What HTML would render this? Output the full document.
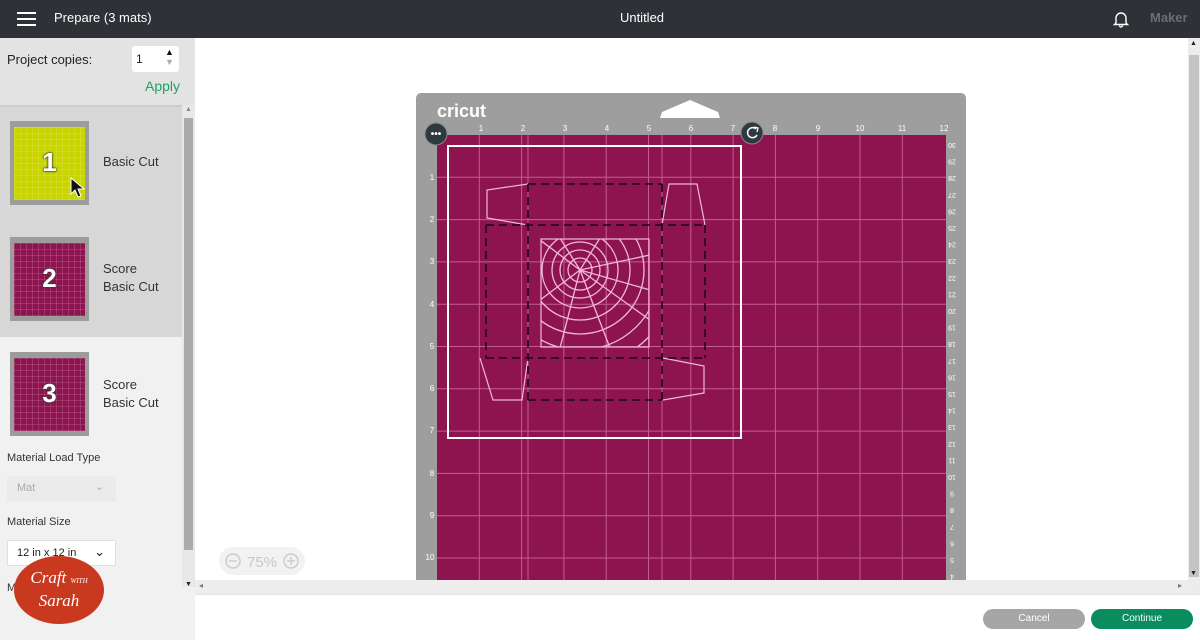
<!DOCTYPE html>
<html><head><meta charset="utf-8"><style>
*{margin:0;padding:0;box-sizing:border-box}
body{width:1200px;height:640px;overflow:hidden;background:#fff;font-family:"Liberation Sans",sans-serif;position:relative}
.a{position:absolute}
.hdr{left:0;top:0;width:1200px;height:38px;background:#2e3136;color:#fff}
.lp{left:0;top:38px;width:195px;height:602px;background:#f1f1f1}
.thumb{position:absolute;left:10px;width:79px;height:84px;background:#9c9c9c}
.thumb .in{position:absolute;left:4px;top:6px;right:4px;bottom:5px;background-image:linear-gradient(rgba(255,255,255,.13) 1px,transparent 1px),linear-gradient(90deg,rgba(255,255,255,.13) 1px,transparent 1px);background-size:6px 6px}
.thumb .n{position:absolute;left:0;right:0;top:26px;text-align:center;color:#fff;font-size:26px;font-weight:bold;text-shadow:0 0 2px #333,0 0 2px #333}
.lbl{position:absolute;left:103px;font-size:13px;color:#333;line-height:18px}
</style></head><body>
<div class="a hdr">
  <div class="a" style="left:17px;top:12px;width:19px;height:2px;background:#fff;box-shadow:0 6px 0 #fff,0 12px 0 #fff"></div>
  <div class="a" style="left:54px;top:10px;font-size:13px">Prepare (3 mats)</div>
  <div class="a" style="left:0;width:1284px;top:10px;text-align:center;font-size:13px">Untitled</div>
  <svg class="a" style="left:1112px;top:10px" width="18" height="18" viewBox="0 0 18 18"><path d="M4 13V8a5 5 0 0 1 10 0v5l1.5 1.5h-13z M7.5 15.5a1.5 1.5 0 0 0 3 0" fill="none" stroke="#fff" stroke-width="1.4"/></svg>
  <div class="a" style="left:1150px;top:10px;font-size:13px;color:#6b6e73;font-weight:bold">Maker</div>
</div>
<div class="a lp">
  <div class="a" style="left:0;top:0;width:195px;height:67px;background:#e3e3e3"></div>
  <div class="a" style="left:7px;top:14px;font-size:13px;color:#222">Project copies:</div>
  <div class="a" style="left:132px;top:8px;width:47px;height:26px;background:#fff;border-radius:3px"></div>
  <div class="a" style="left:136px;top:14px;font-size:12px;color:#222">1</div>
  <div class="a" style="left:165px;top:9px;font-size:9px;color:#111">▲</div>
  <div class="a" style="left:165px;top:19px;font-size:9px;color:#aaa">▼</div>
  <div class="a" style="left:145px;top:40px;font-size:14px;color:#1fa06a">Apply</div>
  <div class="a" style="left:0;top:67px;width:182px;height:232px;background:#d7d7d7;border-top:2px solid #ccc"></div>
  <div class="a" style="left:182px;top:67px;width:13px;height:482px;background:#e8e8e8"></div>
  <div class="a" style="left:184px;top:80px;width:9px;height:432px;background:#ababab"></div>
  <div class="a" style="left:185px;top:68px;font-size:7px;color:#888">▲</div>
  <div class="a" style="left:185px;top:543px;font-size:7px;color:#222">▼</div>
</div>
<div class="thumb" style="top:121px"><div class="in" style="background-color:#c8d500"></div><div class="n">1</div></div>
<svg class="a" style="left:70px;top:177px" width="16" height="22"><path d="M1 1v16l4-4 3 7 3-1-3-7h6z" fill="#111" stroke="#fff" stroke-width="1"/></svg>
<div class="lbl" style="top:153px">Basic Cut</div>
<div class="thumb" style="top:237px"><div class="in" style="background-color:#8e1450"></div><div class="n">2</div></div>
<div class="lbl" style="top:260px">Score<br>Basic Cut</div>
<div class="thumb" style="top:352px"><div class="in" style="background-color:#8e1450"></div><div class="n">3</div></div>
<div class="lbl" style="top:376px">Score<br>Basic Cut</div>
<div class="a" style="left:7px;top:452px;font-size:11px;color:#333">Material Load Type</div>
<div class="a" style="left:7px;top:476px;width:109px;height:26px;background:#ebebeb;font-size:11px;color:#aaa;padding:6px 10px">Mat<span style="position:absolute;right:12px;top:4px">⌄</span></div>
<div class="a" style="left:7px;top:516px;font-size:11px;color:#333">Material Size</div>
<div class="a" style="left:7px;top:540px;width:109px;height:26px;background:#fff;border:1px solid #e0e0e0;font-size:11px;color:#222;padding:6px 9px">12 in x 12 in<span style="position:absolute;right:10px;top:3px;font-size:13px">⌄</span></div>
<div class="a" style="left:7px;top:582px;font-size:11px;color:#333">M</div>
<div class="a" style="left:14px;top:556px;width:90px;height:68px;border-radius:50%;background:#c8391f;color:#fff;font-family:'Liberation Serif',serif;font-style:italic;text-align:center;font-size:17px;line-height:20px;padding-top:12px">Craft <span style="font-size:7px">WITH</span><br>Sarah</div>

<div class="a" style="left:195px;top:580px;width:993px;height:14px;background:#ededed"></div>
<div class="a" style="left:199px;top:581px;font-size:8px;color:#777">◂</div>
<div class="a" style="left:1178px;top:581px;font-size:8px;color:#777">▸</div>
<div class="a" style="left:1188px;top:38px;width:12px;height:556px;background:#ececec"></div>
<div class="a" style="left:1189px;top:55px;width:10px;height:522px;background:#c4c4c4"></div>
<div class="a" style="left:1190px;top:40px;font-size:7px;color:#222">▲</div>
<div class="a" style="left:1190px;top:570px;font-size:7px;color:#222">▼</div>
<div class="a" style="left:195px;top:594px;width:1005px;height:46px;background:#fff;border-top:1px solid #e6e6e6"></div>
<div class="a" style="left:983px;top:609px;width:102px;height:20px;border-radius:10px;background:#a6a6a6;color:#fff;font-size:10px;text-align:center;line-height:20px">Cancel</div>
<div class="a" style="left:1091px;top:609px;width:102px;height:20px;border-radius:10px;background:#0a8c5f;color:#fff;font-size:10px;text-align:center;line-height:20px">Continue</div>

<svg class="a" style="left:0;top:0" width="1188" height="580" viewBox="0 0 1188 580">
  <rect x="416" y="93" width="550" height="500" rx="5" fill="#9e9e9e"/>
  <path d="M660 118 L662 112 L690 100 L718 112 L720 118 Z" fill="#fff"/>
  <text x="437" y="117" font-family="Liberation Sans" font-weight="bold" font-size="18" fill="#fff">cricut</text>
  <rect x="437" y="135" width="509" height="450" fill="#8e1450"/>
  <g stroke="#c45b93" stroke-width="1">
    <line x1="479.3" y1="135" x2="479.3" y2="580"/><line x1="521.6" y1="135" x2="521.6" y2="580"/><line x1="563.9" y1="135" x2="563.9" y2="580"/><line x1="606.2" y1="135" x2="606.2" y2="580"/><line x1="648.5" y1="135" x2="648.5" y2="580"/><line x1="690.8" y1="135" x2="690.8" y2="580"/><line x1="733.1" y1="135" x2="733.1" y2="580"/><line x1="775.4" y1="135" x2="775.4" y2="580"/><line x1="817.7" y1="135" x2="817.7" y2="580"/><line x1="860" y1="135" x2="860" y2="580"/><line x1="902.3" y1="135" x2="902.3" y2="580"/>
    <line x1="437" y1="177.3" x2="946" y2="177.3"/><line x1="437" y1="219.6" x2="946" y2="219.6"/><line x1="437" y1="261.9" x2="946" y2="261.9"/><line x1="437" y1="304.2" x2="946" y2="304.2"/><line x1="437" y1="346.5" x2="946" y2="346.5"/><line x1="437" y1="388.8" x2="946" y2="388.8"/><line x1="437" y1="431.1" x2="946" y2="431.1"/><line x1="437" y1="473.4" x2="946" y2="473.4"/><line x1="437" y1="515.7" x2="946" y2="515.7"/><line x1="437" y1="558" x2="946" y2="558"/>
    <line x1="528" y1="135" x2="528" y2="580"/><line x1="662" y1="135" x2="662" y2="580"/>
  </g>
  <g font-family="Liberation Sans" font-size="8" fill="#fff" text-anchor="middle">
    <text x="481" y="131">1</text><text x="523" y="131">2</text><text x="565" y="131">3</text><text x="607" y="131">4</text><text x="649" y="131">5</text><text x="691" y="131">6</text><text x="733" y="131">7</text><text x="775" y="131">8</text><text x="818" y="131">9</text><text x="860" y="131">10</text><text x="902" y="131">11</text><text x="944" y="131">12</text>
    <text x="432" y="180">1</text><text x="432" y="222">2</text><text x="432" y="264">3</text><text x="432" y="307">4</text><text x="432" y="349">5</text><text x="432" y="391">6</text><text x="432" y="433">7</text><text x="432" y="476">8</text><text x="432" y="518">9</text><text x="430" y="560">10</text>
  </g>
  <g font-family="Liberation Sans" font-size="7" fill="#fff" text-anchor="middle">
    <text transform="translate(952,143) rotate(180)">30</text><text transform="translate(952,159.6) rotate(180)">29</text><text transform="translate(952,176.2) rotate(180)">28</text><text transform="translate(952,192.8) rotate(180)">27</text><text transform="translate(952,209.4) rotate(180)">26</text><text transform="translate(952,226) rotate(180)">25</text><text transform="translate(952,242.6) rotate(180)">24</text><text transform="translate(952,259.2) rotate(180)">23</text><text transform="translate(952,275.8) rotate(180)">22</text><text transform="translate(952,292.4) rotate(180)">21</text><text transform="translate(952,309) rotate(180)">20</text><text transform="translate(952,325.6) rotate(180)">19</text><text transform="translate(952,342.2) rotate(180)">18</text><text transform="translate(952,358.8) rotate(180)">17</text><text transform="translate(952,375.4) rotate(180)">16</text><text transform="translate(952,392) rotate(180)">15</text><text transform="translate(952,408.6) rotate(180)">14</text><text transform="translate(952,425.2) rotate(180)">13</text><text transform="translate(952,441.8) rotate(180)">12</text><text transform="translate(952,458.4) rotate(180)">11</text><text transform="translate(952,475) rotate(180)">10</text><text transform="translate(952,491.6) rotate(180)">9</text><text transform="translate(952,508.2) rotate(180)">8</text><text transform="translate(952,524.8) rotate(180)">7</text><text transform="translate(952,541.4) rotate(180)">6</text><text transform="translate(952,558) rotate(180)">5</text><text transform="translate(952,574.6) rotate(180)">4</text>
  </g>
  <rect x="448" y="146" width="293" height="292" fill="none" stroke="#fff" stroke-width="2"/>
  <g fill="none" stroke="#f0b8d8" stroke-width="1.2">
    <path d="M528 184 L487 190 L487 218 L528 225"/>
    <path d="M662 225 L669 184 L697 184 L705 225"/>
    <path d="M480 358 L493 400 L522 400 L528 358"/>
    <path d="M663 358 L704 366 L704 393 L663 400"/>
  </g>
  <g fill="none" stroke="#1a0610" stroke-width="1.5" stroke-dasharray="8,5">
    <path d="M528 184 H662 M486 225 H705 M486 358 H705 M528 400 H662 M486 225 V358 M528 184 V400 M662 184 V400 M705 225 V358"/>
  </g>
  <clipPath id="c"><rect x="541" y="239" width="108" height="108"/></clipPath>
  <rect x="541" y="239" width="108" height="108" fill="none" stroke="#f0b8d8" stroke-width="1.2"/>
  <g clip-path="url(#c)" fill="none" stroke="#f0b8d8" stroke-width="1.3">
    <circle cx="580" cy="270" r="12"/><circle cx="580" cy="270" r="20"/><circle cx="580" cy="270" r="28"/><circle cx="580" cy="270" r="38"/><circle cx="580" cy="270" r="50"/><circle cx="580" cy="270" r="64"/><circle cx="580" cy="270" r="80"/><circle cx="580" cy="270" r="96"/>
    <path d="M580 270 L540 240 M580 270 L600 238 M580 270 L650 255 M580 270 L650 320 M580 270 L610 348 M580 270 L560 348 M580 270 L540 300 M580 270 L560 238 M580 270 L650 290"/>
  </g>
  <circle cx="436" cy="134" r="11" fill="#2e3a40" stroke="#888"/>
  <text x="436" y="137" font-size="10" fill="#fff" text-anchor="middle" font-family="Liberation Sans" font-weight="bold">•••</text>
  <circle cx="752" cy="133" r="11" fill="#2e3a40" stroke="#888"/>
  <path d="M756 129 A5 5 0 1 0 757 135" fill="none" stroke="#fff" stroke-width="1.5"/><path d="M754 127 L758 128 L757 132" fill="none" stroke="#fff" stroke-width="1.3"/>
  <rect x="219" y="547" width="86" height="28" rx="14" fill="#f2f2f2"/>
  <circle cx="233" cy="561" r="7" fill="none" stroke="#ccc" stroke-width="1.5"/><path d="M229 561h8" stroke="#ccc" stroke-width="1.5"/>
  <text x="262" y="567" font-family="Liberation Sans" font-size="15" fill="#c8c8c8" text-anchor="middle">75%</text>
  <circle cx="291" cy="561" r="7" fill="none" stroke="#ccc" stroke-width="1.5"/><path d="M287 561h8M291 557v8" stroke="#ccc" stroke-width="1.5"/>
</svg>
</body></html>
